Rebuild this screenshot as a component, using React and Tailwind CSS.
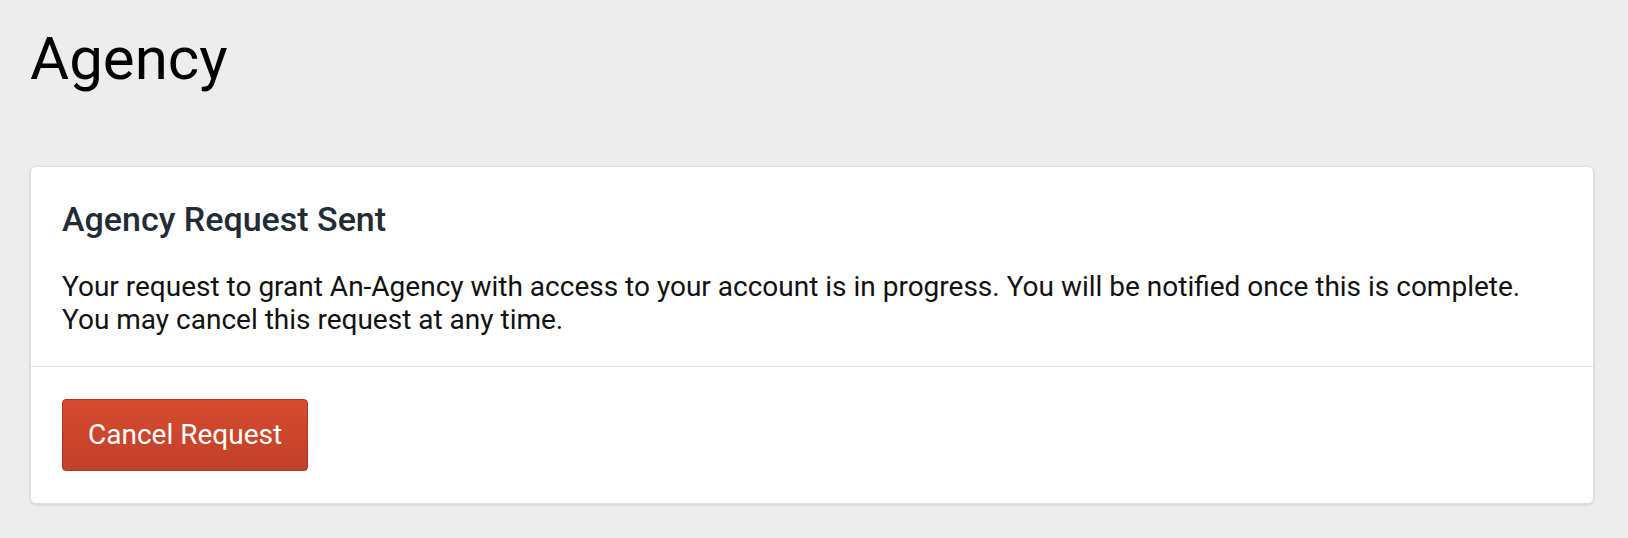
import React from "react";

export default function App() {
    return (
        <div className="min-h-[538px] w-full bg-[#ededed] pl-[30px] pr-[34px] pt-[23px] font-['Roboto',sans-serif]">
            <h1 className="text-[60px] leading-[72px] text-black">Agency</h1>

            <div className="mt-[71px] rounded-[6px] border border-[#dedede] bg-white shadow-[0_1px_3px_rgba(0,0,0,0.12)]">
                <div className="px-[31px] pt-[32px] pb-[30px]">
                    <h2 className="text-[34px] leading-[40px] font-medium text-[#232b36]">Agency Request Sent</h2>
                    <p className="mt-[31px] text-[28px] leading-[33px] text-[#111]">
                        Your request to grant An-Agency with access to your account is in progress. You will be notified once this is complete.
                        <br />
                        You may cancel this request at any time.
                    </p>
                </div>
                <div className="border-t border-[#e3e3e3] px-[31px] pt-[32px] pb-[32px]">
                    <button className="h-[72px] rounded-[4px] border border-[#a9341f] bg-gradient-to-b from-[#d64b2f] to-[#c2402a] px-[25px] text-[28px] text-white">
                        Cancel Request
                    </button>
                </div>
            </div>
        </div>
    );
}
